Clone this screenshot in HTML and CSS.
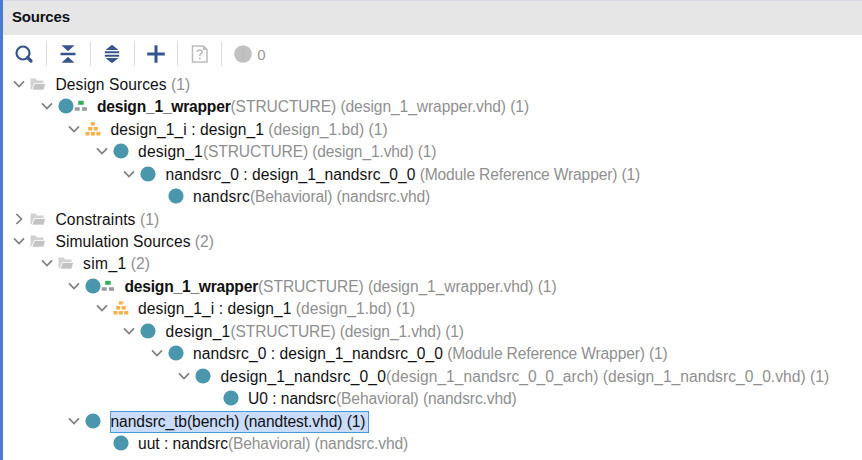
FILE: index.html
```
<!DOCTYPE html>
<html lang="en">
<head>
<meta charset="utf-8">
<title>Sources</title>
<link rel="stylesheet" href="styles.css">
</head>
<body>
<svg class="defs" aria-hidden="true">
  <symbol id="chevron" viewBox="0 0 12 12"><path d="M1 3.3 6 8.5 11 3.3" fill="none" stroke="#808080" stroke-width="1.7"/></symbol>
  <symbol id="folder" viewBox="0 0 16 14"><path d="M.5 12V1.5h5l1.5 2h6.5V6H4.2L1.5 12.5z" fill="#d2d2d2"/><path d="M4.5 6.5h11L13.7 13H2z" fill="#c3c3c3" stroke="#fff" stroke-width=".6"/></symbol>
  <symbol id="circle" viewBox="0 0 16 16"><circle cx="8" cy="8" r="7.6" fill="#4a96ac"/></symbol>
  <symbol id="top" viewBox="0 0 30 16"><circle cx="8" cy="8" r="7.6" fill="#4a96ac"/><path d="M20.2 2.8h5.5v4h-5.5z" fill="#35ae5b"/><path d="M16.7 9.3h5v3.5h-5zM24 9.3h5v3.5h-5z" fill="#989b9e"/></symbol>
  <symbol id="block" viewBox="0 0 16 16"><path d="M5.8 1.3h4v3.3h-4zM3.2 6.1h4v3.4h-4zM8.7 6.1h4v3.4h-4zM.5 11h4v3.4h-4zM5.9 11h4v3.4h-4zM11.3 11h4v3.4h-4z" fill="#fbae45"/></symbol>
</svg>
<main class="panel">
  <header class="title">Sources</header>
  <div class="toolbar">
    <span class="tool"><svg width="20" height="20" viewBox="0 0 20 20"><circle cx="9" cy="9" r="6.5" fill="none" stroke="#36558e" stroke-width="2.2"/><path d="m13.5 13.5 3.5 3.5" stroke="#36558e" stroke-width="3.2" stroke-linecap="round"/></svg></span>
    <span class="tool"><svg width="20" height="20" viewBox="0 0 20 20"><path d="M3.5 1.2h13L10 7.2zM2.5 8.8h15v2.5h-15zM3.5 18.7h13L10 12.7z" fill="#36558e"/></svg></span>
    <span class="tool"><svg width="20" height="20" viewBox="0 0 20 20"><path d="M10 .8 16.5 6h-13zM2.8 7.3h14.4v2H2.8zM2.8 10.8h14.4v2H2.8zM3.5 14h13L10 19.2z" fill="#36558e"/></svg></span>
    <span class="tool"><svg width="20" height="20" viewBox="0 0 20 20"><path d="M10 1.2v17.6M1.2 10h17.6" stroke="#36558e" stroke-width="3"/></svg></span>
    <span class="tool"><svg width="20" height="20" viewBox="0 0 20 20"><path d="M2.5 2h11L17 5.5V18H2.5z" fill="#fff" stroke="#bdbdbd" stroke-width="1.5"/><path d="M13 2v4h4z" fill="#bdbdbd"/><path d="M7.3 8q0-2 2.4-2t2.5 2c0 1.7-2.4 1.7-2.4 4M9.8 13.6v1.8" fill="none" stroke="#bdbdbd" stroke-width="1.7"/></svg></span>
    <span class="status"><svg width="18" height="18" viewBox="0 0 18 18"><circle cx="9" cy="9" r="8.8" fill="#c1c1c1"/><path d="M9 4v6M9 12v2" stroke="#b8b8b8" stroke-width="1.4"/></svg><span class="count">0</span></span>
  </div>
  <div class="tree" id="tree" role="tree"></div>
</main>
<script src="tree.js"></script>
</body>
</html>
```
FILE: styles.css
```
body {
  margin: 0;
  background: #fff;
  font-family: "Liberation Sans", Arial, sans-serif;
  font-size: 15.6px;
  color: #111;
}
.defs { display: none; }
svg { display: block; flex: none; }
.panel {
  box-sizing: border-box;
  height: 460px;
  overflow: hidden;
  border-left: 3px solid #4a7bd4;
}
.title {
  box-sizing: border-box;
  height: 35px;
  padding-left: 9px;
  border-top: 1px solid #d7dce8;
  background: #e6e6e6;
  font-size: 15px;
  letter-spacing: -0.2px;
  font-weight: bold;
  line-height: 32px;
}
.toolbar {
  display: flex;
  align-items: center;
  height: 37.5px;
}
.tool {
  display: flex;
  justify-content: center;
  align-items: center;
  box-sizing: border-box;
  width: 43.8px;
  height: 25px;
  border-right: 1.5px solid #dcdcdc;
}
.tool:first-child { width: 44px; padding-right: 2px; }
.status {
  display: flex;
  align-items: center;
  gap: 5px;
  padding-left: 12px;
  color: #999;
}
.count { font-size: 15px; padding-top: 1px; }
.row {
  display: flex;
  align-items: center;
  height: 22.48px;
  padding-left: 10px;
  white-space: pre;
}
.indent { flex: none; width: calc(27.5px * var(--depth)); }
.chevron { width: 12px; height: 12px; }
.chevron.collapsed { transform: rotate(-90deg); }
.chevron.leaf { visibility: hidden; }
.icon { width: 16px; height: 16px; margin: 0 9.5px 0 5px; }
.icon.folder { height: 14px; }
.icon.top { width: 30px; }
.label { line-height: 20px; margin-top: 2px; }
.top-module { font-weight: bold; }
.detail { color: #8f8f8f; }
.label.selected {
  box-sizing: border-box;
  height: 22px;
  margin-left: -1px;
  padding-right: 2px;
  border: 1px solid #449bdc;
  background: #c9dcfb;
}
```
FILE: tree.js
```
// depth, icon, name, name width, detail, detail width, state
const rows = [
  [0, "folder", "Design Sources", 111.2, " (1)", 23.5],
  [1, "top", "design_1_wrapper", 133.5, "(STRUCTURE) (design_1_wrapper.vhd) (1)", 298.5],
  [2, "block", "design_1_i : design_1", 153.5, " (design_1.bd) (1)", 123.8],
  [3, "circle", "design_1", 65, "(STRUCTURE) (design_1.vhd) (1)", 233.3],
  [4, "circle", "nandsrc_0 : design_1_nandsrc_0_0", 250, " (Module Reference Wrapper) (1)", 224.5],
  [5, "circle", "nandsrc", 57, "(Behavioral) (nandsrc.vhd)", 180, "leaf"],
  [0, "folder", "Constraints", 80, " (1)", 23.8, "collapsed"],
  [0, "folder", "Simulation Sources", 135, " (2)", 23.5],
  [1, "folder", "sim_1", 43.5, " (2)", 23.5],
  [2, "top", "design_1_wrapper", 133.5, "(STRUCTURE) (design_1_wrapper.vhd) (1)", 298.5],
  [3, "block", "design_1_i : design_1", 153.5, " (design_1.bd) (1)", 123.8],
  [4, "circle", "design_1", 65, "(STRUCTURE) (design_1.vhd) (1)", 233.3],
  [5, "circle", "nandsrc_0 : design_1_nandsrc_0_0", 250, " (Module Reference Wrapper) (1)", 224.5],
  [6, "circle", "design_1_nandsrc_0_0", 165.5, "(design_1_nandsrc_0_0_arch) (design_1_nandsrc_0_0.vhd) (1)", 443.2],
  [7, "circle", "U0 : nandsrc", 88, "(Behavioral) (nandsrc.vhd)", 180.7, "leaf"],
  [2, "circle", "nandsrc_tb(bench) (nandtest.vhd) (1)", 255, "", 0, "selected"],
  [3, "circle", "uut : nandsrc", 90, "(Behavioral) (nandsrc.vhd)", 180, "leaf"]
];

const tree = document.getElementById("tree");

function fit(span, width) {
  const natural = span.getBoundingClientRect().width;
  span.style.letterSpacing = (width - natural) / span.textContent.length + "px";
}

for (const [depth, icon, name, nameWidth, detail, detailWidth, state = ""] of rows) {
  const row = document.createElement("div");
  row.className = "row";
  row.setAttribute("role", "treeitem");
  row.innerHTML = `<span class="indent" style="--depth:${depth}"></span>
    <svg class="chevron ${state}"><use href="#chevron"/></svg>
    <svg class="icon ${icon}"><use href="#${icon}"/></svg>
    <span class="label ${state === "selected" ? "selected" : ""}"><span class="name ${icon === "top" ? "top-module" : ""}">${name}</span><span class="detail">${detail}</span></span>`.replace(/>\s+</g, "><");
  tree.append(row);
  fit(row.querySelector(".name"), nameWidth);
  if (detail) fit(row.querySelector(".detail"), detailWidth);
}
```
